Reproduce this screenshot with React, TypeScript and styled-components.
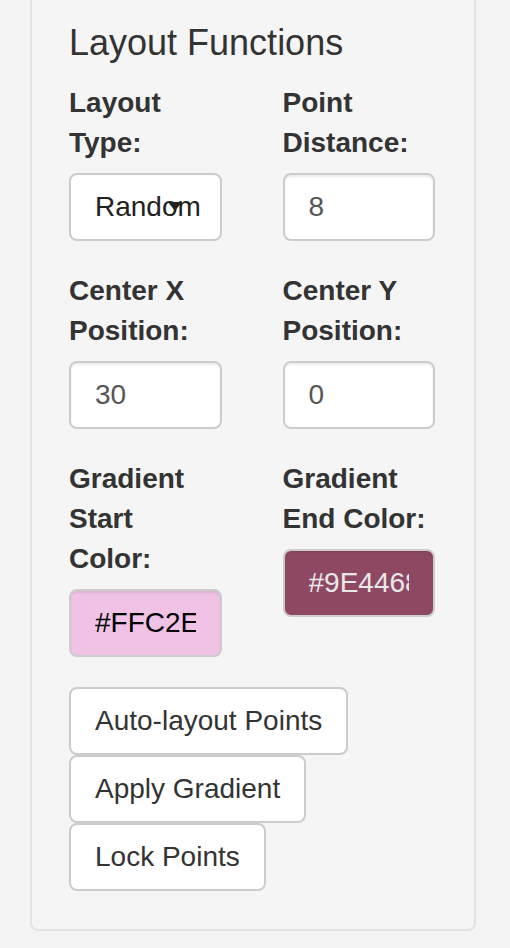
import React from "react";
import styled, { createGlobalStyle } from "styled-components";

const GlobalStyle = createGlobalStyle`
  html, body {
    margin: 0;
    padding: 0;
    background: #f4f4f4;
  }
  body {
    font-family: "Liberation Sans", Arial, Helvetica, sans-serif;
    color: #333;
  }
  * { box-sizing: border-box; }
`;

const Page = styled.div`
  padding: 0 34px 18px 30px;
`;

const Panel = styled.div`
  background: #f5f5f5;
  border: 2px solid #e3e3e3;
  border-top: none;
  border-radius: 0 0 8px 8px;
  padding: 23px 39px 38px 37px;
`;

const Title = styled.h4`
  font-size: 36px;
  font-weight: 500;
  line-height: 1.1;
  margin: 0 0 20px;
  color: #333;
`;

const Grid = styled.div`
  display: grid;
  grid-template-columns: 1fr 1fr;
  column-gap: 61px;
  align-items: start;
`;

const FormGroup = styled.div`
  margin-bottom: 30px;
  min-width: 0;
`;

const Label = styled.label`
  display: block;
  font-size: 28px;
  font-weight: 700;
  line-height: 40px;
  margin-bottom: 10px;
  color: #333;
`;

const Input = styled.input<{ $bg?: string; $fg?: string }>`
  display: block;
  width: 100%;
  height: 68px;
  padding: 12px 24px;
  font-family: inherit;
  font-size: 28px;
  line-height: 40px;
  color: ${(p) => p.$fg || "#555"};
  background: ${(p) => p.$bg || "#fff"};
  border: 2px solid #ccc;
  border-radius: 8px;
  box-shadow: inset 0 2px 2px rgba(0, 0, 0, 0.075);
  outline: none;
`;

const SelectBox = styled.div`
  position: relative;
  width: 100%;
  height: 68px;
  padding: 12px 24px;
  font-size: 28px;
  line-height: 40px;
  color: #222;
  background: #fff;
  border: 2px solid #ccc;
  border-radius: 8px;
  white-space: nowrap;
  overflow: hidden;
`;

const Arrow = styled.span`
  position: absolute;
  left: 97px;
  top: 27px;
  width: 0;
  height: 0;
  border-left: 7px solid transparent;
  border-right: 7px solid transparent;
  border-top: 9px solid #222;
`;

const ButtonStack = styled.div`
  display: flex;
  flex-direction: column;
  align-items: flex-start;
`;

const Button = styled.button`
  font-family: inherit;
  font-size: 28px;
  line-height: 40px;
  padding: 12px 24px;
  color: #333;
  background: #fff;
  border: 2px solid #ccc;
  border-radius: 8px;
  cursor: pointer;
  margin: 0;
`;

export default function App() {
  return (
    <>
      <GlobalStyle />
      <Page>
        <Panel>
          <Title>Layout Functions</Title>
          <Grid>
            <FormGroup>
              <Label>Layout Type:</Label>
              <SelectBox>
                Random
                <Arrow />
              </SelectBox>
            </FormGroup>
            <FormGroup>
              <Label>Point Distance:</Label>
              <Input readOnly value="8" />
            </FormGroup>
            <FormGroup>
              <Label>Center X Position:</Label>
              <Input readOnly value="30" />
            </FormGroup>
            <FormGroup>
              <Label>Center Y Position:</Label>
              <Input readOnly value="0" />
            </FormGroup>
            <FormGroup>
              <Label>
                Gradient Start
                <br />
                Color:
              </Label>
              <Input readOnly value="#FFC2E" $bg="#f0c3e6" $fg="#000" />
            </FormGroup>
            <FormGroup>
              <Label>Gradient End Color:</Label>
              <Input readOnly value="#9E4468" $bg="#8e4864" $fg="#e8e8e8" />
            </FormGroup>
          </Grid>
          <ButtonStack>
            <Button>Auto-layout Points</Button>
            <Button>Apply Gradient</Button>
            <Button>Lock Points</Button>
          </ButtonStack>
        </Panel>
      </Page>
    </>
  );
}
